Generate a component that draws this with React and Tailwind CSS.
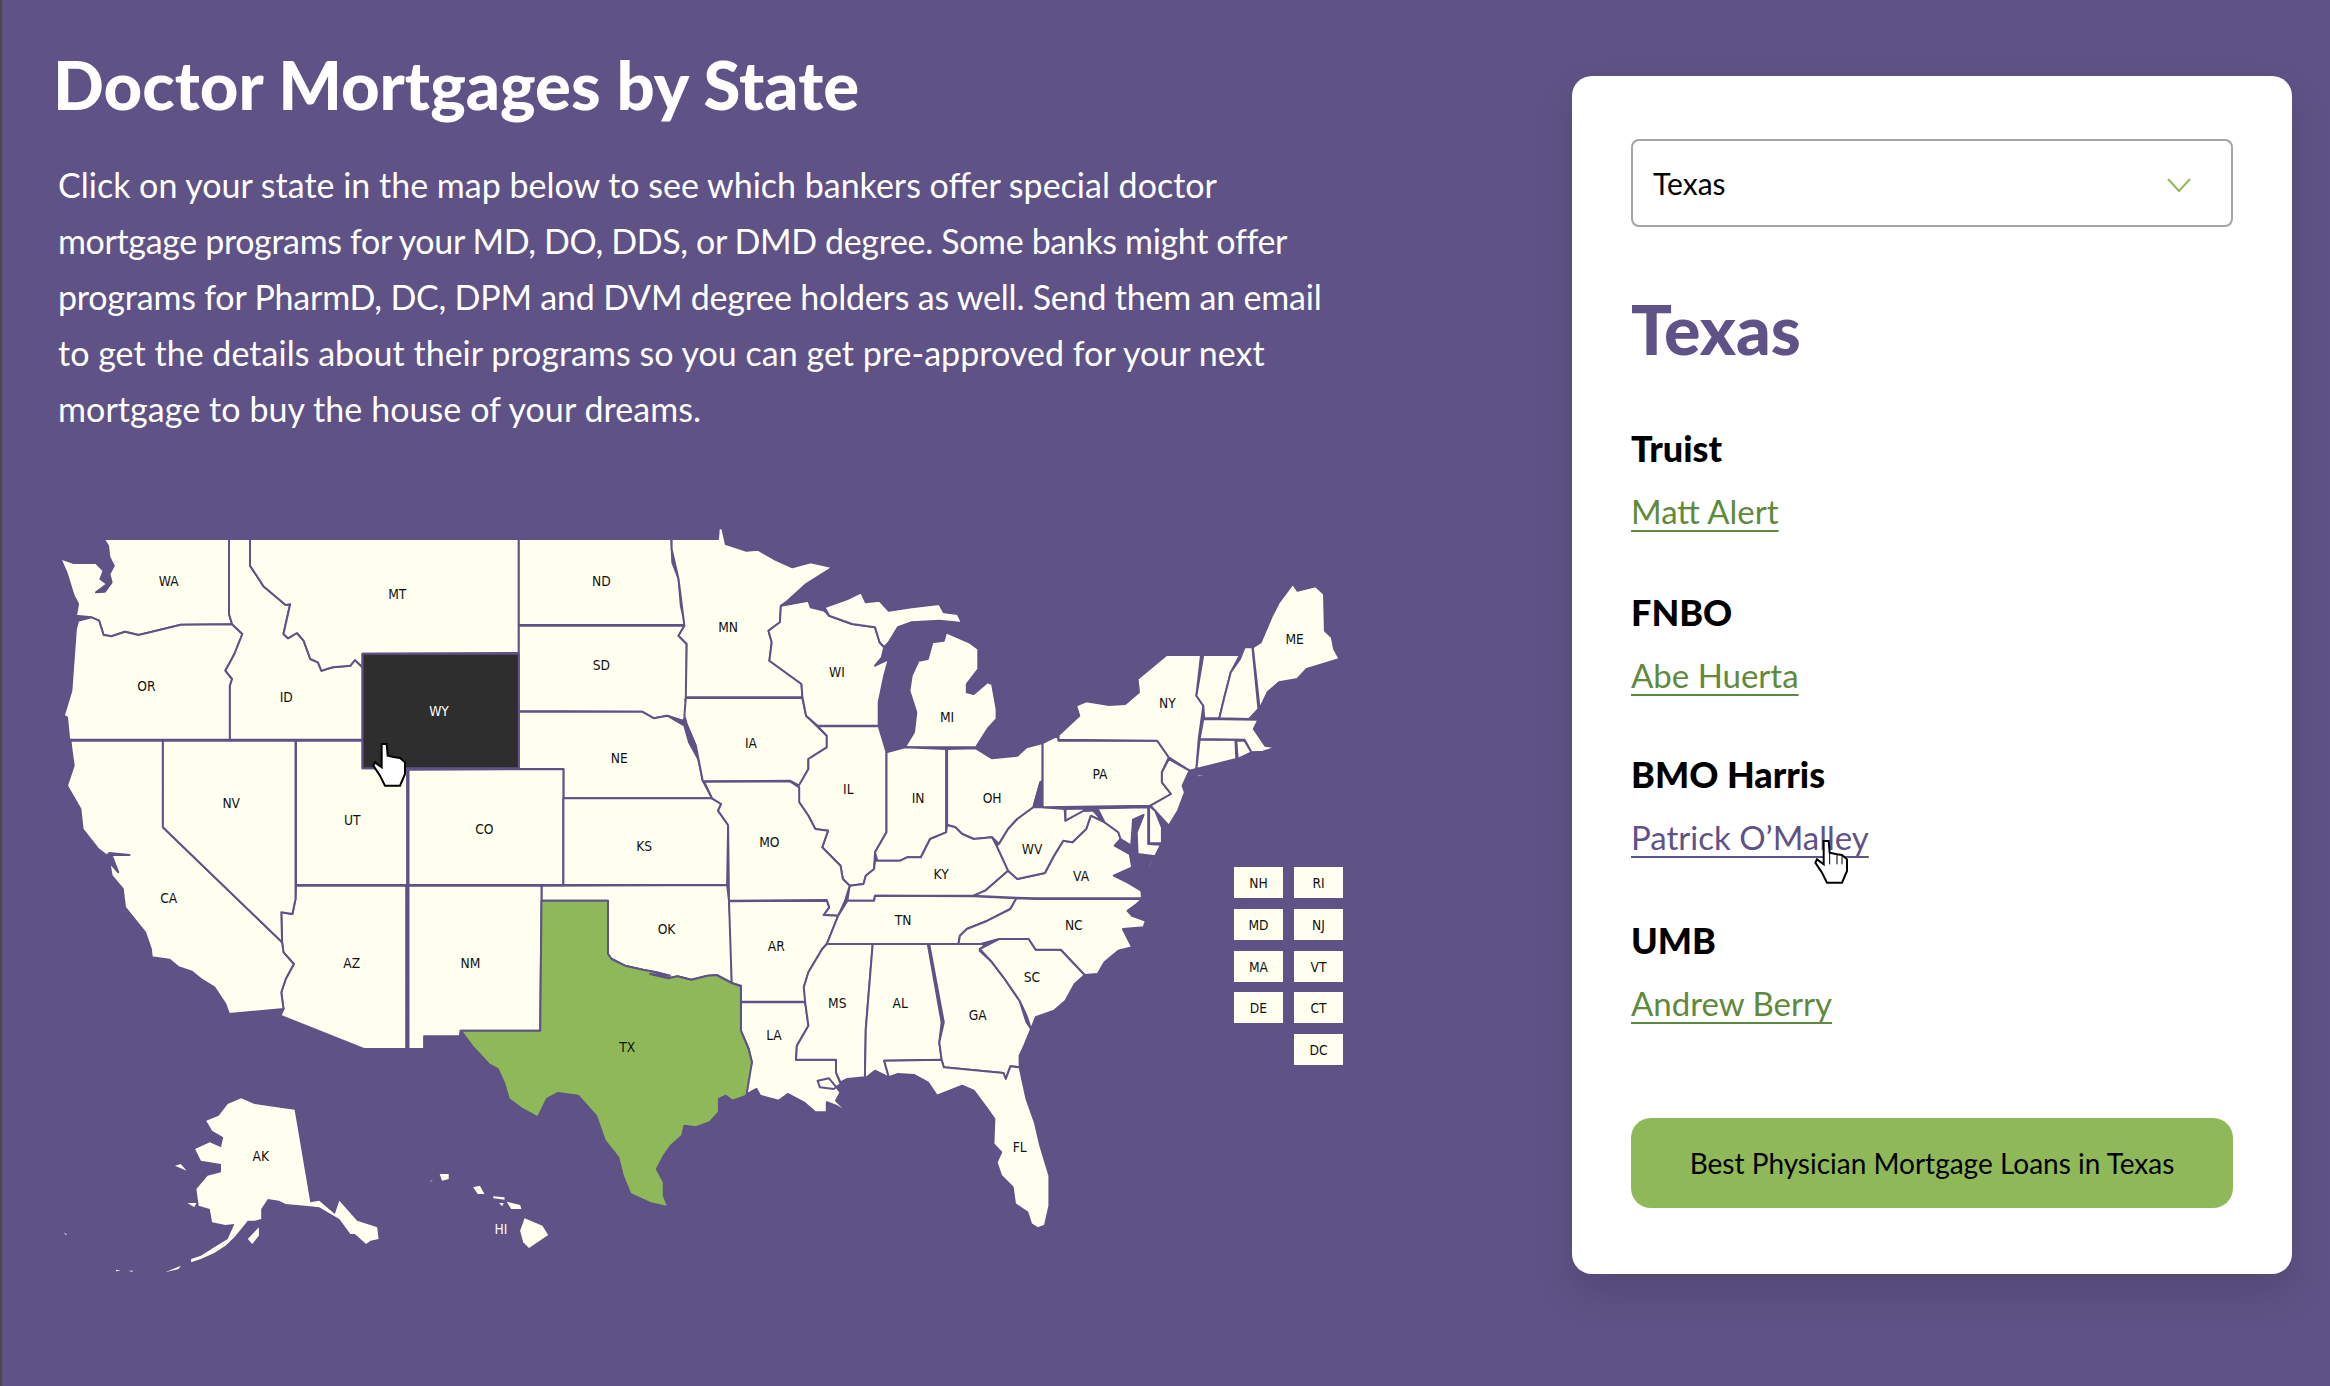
const to = (ox, oy, sx, sy) => (str) =>
  str
    .trim()
    .split(/\s+/)
    .map((p) => {
      const [x, y] = p.split(",").map(Number);
      return `${(ox + x / sx).toFixed(1)},${(oy + y / sy).toFixed(1)}`;
    })
    .join(" ");

// traced in four frames of the map: west, east, south-west, south-east
const W = to(0, 500, 2.24, 3);
const E = to(650, 500, 2.178, 3);
const SW = to(0, 950, 2.24, 3);
const SE = to(650, 950, 2.178, 3);

const CREAM = "#fffff0";
const GREEN = "#8fb958";
const DARK = "#2e2e2e";

const states = [
  { p: W("232,120 513,120 513,345 520,376 405,377 350,395 310,408 280,398 250,412 232,408 222,365 205,355 170,350 175,315 165,290 150,225 135,178 165,192 215,192 232,215 225,240 240,255 215,280 235,278 250,250 245,225 255,200 245,175 242,140") },
  { p: W("175,365 205,355 222,365 232,408 250,412 280,398 310,408 350,395 405,377 520,376 543,405 525,465 505,515 520,540 515,560 515,722 155,722 150,655 143,650 160,575 165,480 170,390") },
  { p: W("513,120 560,120 560,200 580,240 590,262 640,318 650,316 640,375 635,405 645,418 665,402 680,425 695,480 712,490 720,515 745,505 785,500 795,483 812,505 812,722 515,722 515,560 520,540 505,515 525,465 543,405 520,376 513,345") },
  { p: W("560,120 1162,120 1162,462 812,464 812,505 795,483 785,500 745,505 720,515 712,490 695,480 680,425 665,402 645,418 635,405 640,375 650,316 640,318 590,262 580,240 560,200") },
  { p: W("1162,120 1504,120 1506,190 1520,240 1525,320 1535,378 1162,378") },
  { p: W("1162,380 1533,380 1520,410 1538,435 1538,595 1535,600 1540,640 1530,665 1495,650 1465,658 1438,638 1162,636") },
  { p: W("1162,638 1438,638 1465,658 1495,650") + " " + E("75,680 85,730 105,780 115,845 135,898") + " " + W("1262,898 1262,810 1162,810") },
  { p: W("915,812 1262,810 1262,1158 915,1158") },
  { p: W("1262,898") + " " + E("135,898 155,915 148,935 170,978 168,1158") + " " + W("1262,1158") },
  { p: W("1213,1160") + " " + E("168,1158 172,1205 178,1330 178,1452 145,1428 125,1430 90,1442 60,1432 40,1438 0,1425") + " " + W("1500,1430 1470,1420 1440,1412 1400,1400 1370,1380 1362,1365 1362,1205 1213,1205") },
  { p: W("915,1160 1213,1160 1213,1205") + " " + SW("1210,245 1032,245 1030,262 950,262 950,300 915,300") },
  { p: W("663,1160 910,1160") + " " + SW("910,300 815,300 628,200 635,180 630,130 640,90 658,45 635,10") + " " + W("632,1330 630,1240 655,1245 662,1200") },
  { p: W("158,725 365,725 365,985 632,1330") + " " + SW("635,10 658,45 640,90 630,130 635,180 513,195 505,165 480,115 450,90 430,68 400,55 380,32 340,25 338,0") + " " + W("325,1300 280,1225 275,1170 250,1130 245,1090 265,1120 250,1068 290,1068 245,1062 240,1070 220,1050 185,990 180,930 150,860 165,800 160,750") },
  { p: W("365,725 662,725 662,1200 655,1245 630,1240 632,1330 365,985") },
  { p: W("663,725 812,725 812,808 912,808 912,1158 663,1158") },
  { p: E("47,120 148,120 150,85 158,90 165,135 210,155 235,152 270,180 310,205 350,190 398,205 340,255 300,305 285,320 283,370 258,395 265,430 260,485 330,555 332,595 78,595 80,435 62,410 75,380 62,240 47,150") },
  { p: E("78,597 332,597 340,650 385,710 385,745 345,780 345,810 325,860 305,845 115,847 100,740 80,675 75,650") },
  { p: E("285,320 345,305 350,325 380,335 390,350 440,375 490,385 500,430 510,445 505,475 490,500 520,480 510,530 498,610 498,680 365,680 340,650 332,595 330,555 260,485 265,430 258,395 283,370") },
  { p: E("380,325 430,300 460,280 470,310 500,305 520,335 570,325 630,315 640,340 670,345 680,372 630,365 570,370 540,385 520,430 510,445 500,430 490,385 440,375 390,350") },
  { p: E("645,400 695,430 715,450 715,510 690,555 690,580 705,585 735,550 745,555 755,630 755,660 735,690 710,745 555,745 575,700 580,640 565,575 570,530 585,485 605,480 615,430 640,425") },
  { p: E("365,682 498,682 515,760 515,1000 490,1060 488,1110 470,1130 465,1155 435,1160 420,1140 415,1100 375,1045 388,995 360,990 345,950 325,910 322,865 345,810 345,780 385,745 385,710") },
  { p: E("515,760 555,745 645,750 645,1000 610,1020 590,1075 560,1075 545,1085 495,1085 490,1060 515,1000") },
  { p: E("647,750 710,748 745,778 800,770 820,745 855,732 855,845 850,850 835,925 800,960 780,990 760,1035 745,1015 705,1020 680,1005 665,985 647,978") },
  { p: E("647,978 665,985 680,1005 705,1020 745,1015 755,1040 780,1115 730,1175 705,1190 490,1190 488,1205 430,1205 435,1160 465,1155 470,1130 488,1110 490,1085 545,1085 560,1075 590,1075 610,1020 645,1000") },
  { p: E("118,848 305,847 325,865 325,910 345,950 360,990 388,995 375,1045 415,1100 420,1140 435,1160 425,1205 410,1250 378,1248 390,1225 385,1203 172,1205 170,978 148,935 155,915 135,898") },
  { p: E("172,1207 385,1205 390,1225 378,1248 410,1250 385,1335 375,1350 345,1420 335,1465 340,1508 198,1508 198,1460 178,1452") },
  { p: SE("198,160 338,160 345,230 320,290 318,332 405,332 405,370 415,405 400,420 370,415 365,395 390,388 415,430 405,455 435,495 405,470 385,460 385,490 360,490 335,460 300,435 280,455 240,440 232,420 205,440 215,380 222,340 215,300 198,245") },
  { p: SE("385,-15 485,-15 470,240 468,385 430,390 415,400 405,370 405,332 318,332 320,290 345,230 338,160 335,115 345,70 375,0") },
  { p: SE("485,-15 605,-15 635,220 630,280 635,332 510,335 520,385 490,365 472,385 468,385 470,240") },
  { p: E("430,1205 488,1205 490,1190 705,1192 798,1198 785,1230 735,1265 690,1290 675,1310 672,1335 385,1335 410,1250") },
  { p: SE("608,-15 730,-15 718,5 745,40 770,85 805,155 820,220 830,240 815,290 805,320 805,355 785,352 775,390 770,372 640,355 635,332 630,280 640,220") },
  { p: SE("510,335 635,332 640,355 770,372 775,390 785,352 805,355 820,450 838,520 850,590 870,680 870,770 860,830 845,838 830,825 822,790 795,765 790,715 765,680 755,640 765,610 748,585 750,510 735,480 705,425 680,410 625,440 605,400 575,378 540,375 520,385") },
  { p: SE("718,0 760,-30 825,-30 840,2 895,2 947,78 925,105 905,155 880,185 840,205 830,240 820,200 805,155 770,85 745,40") },
  { p: E("672,1335 675,1310 690,1290 735,1265 785,1230 798,1198 840,1200 1072,1200 1060,1215 1040,1235 1050,1250 1080,1265 1075,1285 1030,1290 1050,1345 1020,1355 990,1390 975,1425 947,1428 895,1352 840,1352 825,1320 760,1320 720,1335") },
  { p: E("705,1190 730,1175 780,1115 800,1140 860,1122 880,1070 900,1025 920,1030 950,990 960,950 990,970 1020,1000 1025,1020 1012,1040 1045,1065 1050,1105 1010,1130 1040,1150 1070,1175 1072,1198 840,1198 798,1196") },
  { p: E("1100,1075 1075,1140 1085,1100 1095,1075") },
  { p: E("850,850 835,925 855,925 903,930 905,965 940,935 965,935 985,965 960,950 950,990 920,1030 900,1025 880,1070 860,1122 800,1140 780,1115 755,1040 760,1035 780,990 800,960 835,925") },
  { p: E("855,732 888,710 890,725 1105,725 1130,775 1115,820 1115,850 1135,885 1090,920 855,925") },
  { p: E("890,722 890,708 935,650 928,620 950,607 1000,618 1035,615 1065,580 1062,540 1125,468 1200,468 1190,590 1205,620 1195,720 1190,810 1175,815 1130,775 1105,725") },
  { p: E("1180,830 1250,815 1195,835") },
  { p: E("1130,780 1175,815 1160,860 1165,880 1150,935 1130,980 1100,935 1090,920 1135,885 1115,850 1115,820") },
  { p: E("905,930 1085,925 1085,1035 1113,1037 1100,1072 1062,1065 1060,1000 1075,948 1052,962 1048,1040 1025,1020 1020,1000 990,970 975,930 945,935 905,965") },
  { p: E("1087,920 1100,935 1115,985 1115,1033 1087,1033") },
  { p: E("1197,722 1275,722 1277,780 1190,810") },
  { p: E("1277,725 1295,725 1310,760 1280,780") },
  { p: E("1205,660 1325,662 1315,690 1340,740 1365,745 1335,758 1310,760 1295,722 1197,720") },
  { p: E("1205,468 1285,468 1265,520 1250,600 1240,658 1207,658 1205,620 1190,590") },
  { p: E("1295,445 1312,445 1325,630 1305,660 1240,658 1250,600 1265,520 1285,480") },
  { p: E("1313,445 1330,430 1355,350 1370,310 1400,255 1410,275 1450,262 1468,285 1470,395 1485,415 1490,450 1502,480 1430,510 1410,540 1370,550 1345,580 1328,630") },
];

const wyoming = W("812,464 1162,464 1162,808 812,808");

const texas =
  W("1213,1205 1362,1205 1362,1365 1370,1380 1400,1400 1440,1412 1470,1420 1500,1430") +
  " " +
  E("0,1425 40,1438 60,1432 90,1442 125,1430 145,1428 178,1452 198,1462") +
  " " +
  SE("198,245 215,300 222,340 210,440 180,455 165,440 150,450 150,490 130,520 100,535 75,530 70,560 45,590 30,620 15,660 30,700 30,740 40,775 0,762") +
  " " +
  SW("1412,735 1395,680 1385,625 1355,575 1335,500 1295,440 1250,432 1225,450 1205,505 1170,480 1140,450 1130,405 1115,360 1095,345 1060,295 1035,250 1032,245 1210,245");

const islands = [
  SW("540,448 570,465 635,478 660,482 695,760 715,755 750,795 760,755 800,815 845,835 848,870 830,875 820,885 795,855 785,855 760,810 715,775 695,772 640,765 625,755 600,750 585,780 585,810 570,815 555,815 525,865 505,890 480,912 450,930 428,940 428,930 450,920 480,895 510,870 525,825 505,828 475,820 470,780 445,770 440,720 465,680 495,670 495,645 450,635 437,600 470,580 495,595 500,565 475,545 462,515 490,500 510,465"),
  SW("420,762 440,762 435,775"),
  SW("392,650 405,645 418,665"),
  SW("555,870 580,835 580,860 565,885"),
  SW("370,970 405,950 400,960"),
  SW("260,962 270,965 260,967"),
  SW("288,965 300,965 295,968"),
  SW("143,850 150,858 147,858"),
  SW("985,675 1005,675 1005,690 990,695"),
  SW("962,700 970,690 965,698"),
  SW("1060,715 1075,710 1085,735 1070,735"),
  SW("1105,742 1130,745 1130,752 1105,748"),
  SW("1118,762 1128,762 1125,772"),
  SW("1135,758 1165,768 1168,780 1145,780"),
  SW("1175,808 1215,830 1228,858 1185,897 1172,880 1165,845"),
];

const labels = [
  [W, "WA", 378, 246], [W, "MT", 890, 284], [W, "ND", 1347, 246], [W, "OR", 328, 560],
  [W, "ID", 641, 594], [W, "SD", 1347, 499], [W, "NV", 518, 912], [W, "UT", 789, 964],
  [W, "CO", 1085, 990], [W, "NE", 1387, 776], [W, "KS", 1443, 1042], [W, "CA", 378, 1196],
  [W, "AZ", 788, 1391], [W, "NM", 1054, 1391], [W, "OK", 1493, 1290],
  [E, "MN", 170, 385], [E, "WI", 407, 519], [E, "MI", 647, 653], [E, "IA", 220, 732],
  [E, "IL", 432, 871], [E, "IN", 584, 896], [E, "OH", 745, 896], [E, "PA", 980, 826],
  [E, "NY", 1127, 613], [E, "ME", 1404, 421], [E, "MO", 260, 1029], [E, "WV", 832, 1051],
  [E, "KY", 634, 1124], [E, "VA", 939, 1130], [E, "TN", 551, 1263], [E, "NC", 923, 1279],
  [E, "AR", 275, 1341], [E, "SC", 832, 1435],
  [SE, "MS", 408, 163], [SE, "AL", 545, 163], [SE, "GA", 714, 198], [SE, "LA", 270, 259],
  [SE, "FL", 805, 594], [SW, "TX", 1405, 293], [SW, "AK", 584, 620],
];

const insets = [
  ["NH", 1234, 868], ["RI", 1294, 868],
  ["MD", 1234, 910], ["NJ", 1294, 910],
  ["MA", 1234, 952], ["VT", 1294, 952],
  ["DE", 1234, 993], ["CT", 1294, 993],
  ["DC", 1294, 1035],
];

const banks = [
  { name: "Truist", person: "Matt Alert", shift: "" },
  { name: "FNBO", person: "Abe Huerta", shift: "" },
  { name: "BMO Harris", person: "Patrick O’Malley", shift: "-mt-[2px]", hover: true },
  { name: "UMB", person: "Andrew Berry", shift: "mt-[2px]" },
];

const intro = [
  { text: "Click on your state in the map below to see which bankers offer special doctor", track: "" },
  { text: "mortgage programs for your MD, DO, DDS, or DMD degree. Some banks might offer", track: "tracking-[-0.36px]" },
  { text: "programs for PharmD, DC, DPM and DVM degree holders as well. Send them an email", track: "tracking-[-0.2px]" },
  { text: "to get the details about their programs so you can get pre-approved for your next", track: "tracking-[0.03px]" },
  { text: "mortgage to buy the house of your dreams.", track: "tracking-[0.07px]" },
];

const handOutline =
  "M50 30 L65 30 L68 65 L90 70 L105 72 L120 85 L120 120 L105 155 L60 155 L45 125 L25 95 L30 85 L50 100 Z";

const Hand = ({ className }) => (
  <svg viewBox="0 0 150 180" width="50" height="60" className={className}>
    <path d={handOutline} fill="#fff" stroke="#000" strokeWidth="6" />
    <path d="M68 65 V100 M90 70 V100 M105 72 V100" stroke="#000" strokeWidth="3" fill="none" />
  </svg>
);

const Label = ({ x, y, fill = "#111", children }) => (
  <text
    transform={`translate(${x} ${y}) scale(0.85 1)`}
    fill={fill}
    textAnchor="middle"
    dominantBaseline="central"
    fontSize="14.5"
    fontFamily="DejaVu Sans, sans-serif"
  >
    {children}
  </text>
);

const UsMap = () => (
  <svg viewBox="50 520 1310 770" className="w-[1310px] h-[770px] block">
    <g stroke="#5f5286" strokeWidth="2" strokeLinejoin="round" fill={CREAM}>
      {states.map((s, i) => (
        <polygon key={i} points={s.p} />
      ))}
      <polygon points={wyoming} fill={DARK} />
      <polygon points={texas} fill={GREEN} />
    </g>
    <g fill={CREAM}>
      {islands.map((p, i) => (
        <polygon key={i} points={p} />
      ))}
      {insets.map(([name, x, y]) => (
        <rect key={name} x={x} y={y} width="49" height="31" />
      ))}
    </g>
    {labels.map(([f, name, x, y]) => {
      const [px, py] = f(`${x},${y}`).split(",");
      return (
        <Label key={name} x={px} y={py}>
          {name}
        </Label>
      );
    })}
    {insets.map(([name, x, y]) => (
      <Label key={name} x={x + 24.5} y={y + 16}>
        {name}
      </Label>
    ))}
    <Label x="439" y="712" fill="#fff">WY</Label>
    <Label x="501" y="1230" fill="#fff">HI</Label>
    <svg x="365" y="735" width="50" height="60" viewBox="0 0 150 180">
      <path d={handOutline} fill="#fff" stroke="#000" strokeWidth="6" />
    </svg>
  </svg>
);

const App = () => {
  return (
    <div className="relative w-full h-[1386px] overflow-hidden flex justify-between items-start bg-[#5f5286] border-l-2 border-[#4a4a4a] font-['Lato',sans-serif]">
      <div className="pt-[48px] pl-[51px]">
        <h1 className="text-[67px] leading-[72px] font-black text-white">Doctor Mortgages by State</h1>
        <div className="mt-[37px] ml-[5px] w-[1340px] text-[34px] leading-[56px] text-white">
          {intro.map((line) => (
            <p key={line.text} className={line.track}>
              {line.text}
            </p>
          ))}
        </div>
        <div className="mt-[82px] -ml-[3px]">
          <UsMap />
        </div>
      </div>

      <div className="mt-[76px] mr-[38px] w-[720px] px-[59px] pt-[63px] pb-[66px] bg-white rounded-[20px] shadow-[0_20px_40px_rgba(0,0,0,0.12)]">
        <div className="h-[88px] flex items-center justify-between pl-[20px] pr-[40px] border-2 border-[#a5a5a5] rounded-lg text-[30px] text-black">
          <span>Texas</span>
          <svg width="24" height="14" viewBox="0 0 24 14" fill="none" stroke={GREEN} strokeWidth="2" className="mt-[4px]">
            <path d="M1 1 L12 13 L23 1" />
          </svg>
        </div>
        <h2 className="mt-[68px] text-[68px] leading-[68px] font-black text-[#5f5286]">Texas</h2>
        <div className="mt-[65px] flex flex-col gap-[60px]">
          {banks.map((b) => (
            <div key={b.name} className={b.shift}>
              <h3 className="text-[36px] leading-[40px] font-black text-black">{b.name}</h3>
              <div className="mt-[23px] h-[41px]">
                <a
                  className={`relative inline-block text-[33px] leading-[40px] underline underline-offset-[6px] decoration-2 ${
                    b.hover ? "text-[#5f5286]" : "text-[#5f8a3c]"
                  }`}
                >
                  {b.person}
                  {b.hover && <Hand className="absolute left-[176px] top-[14px]" />}
                </a>
              </div>
            </div>
          ))}
        </div>
        <button className="mt-[94px] w-full h-[90px] rounded-[20px] bg-[#8fb958] text-[28px] text-black">
          Best Physician Mortgage Loans in Texas
        </button>
      </div>
    </div>
  );
};

export default App;
